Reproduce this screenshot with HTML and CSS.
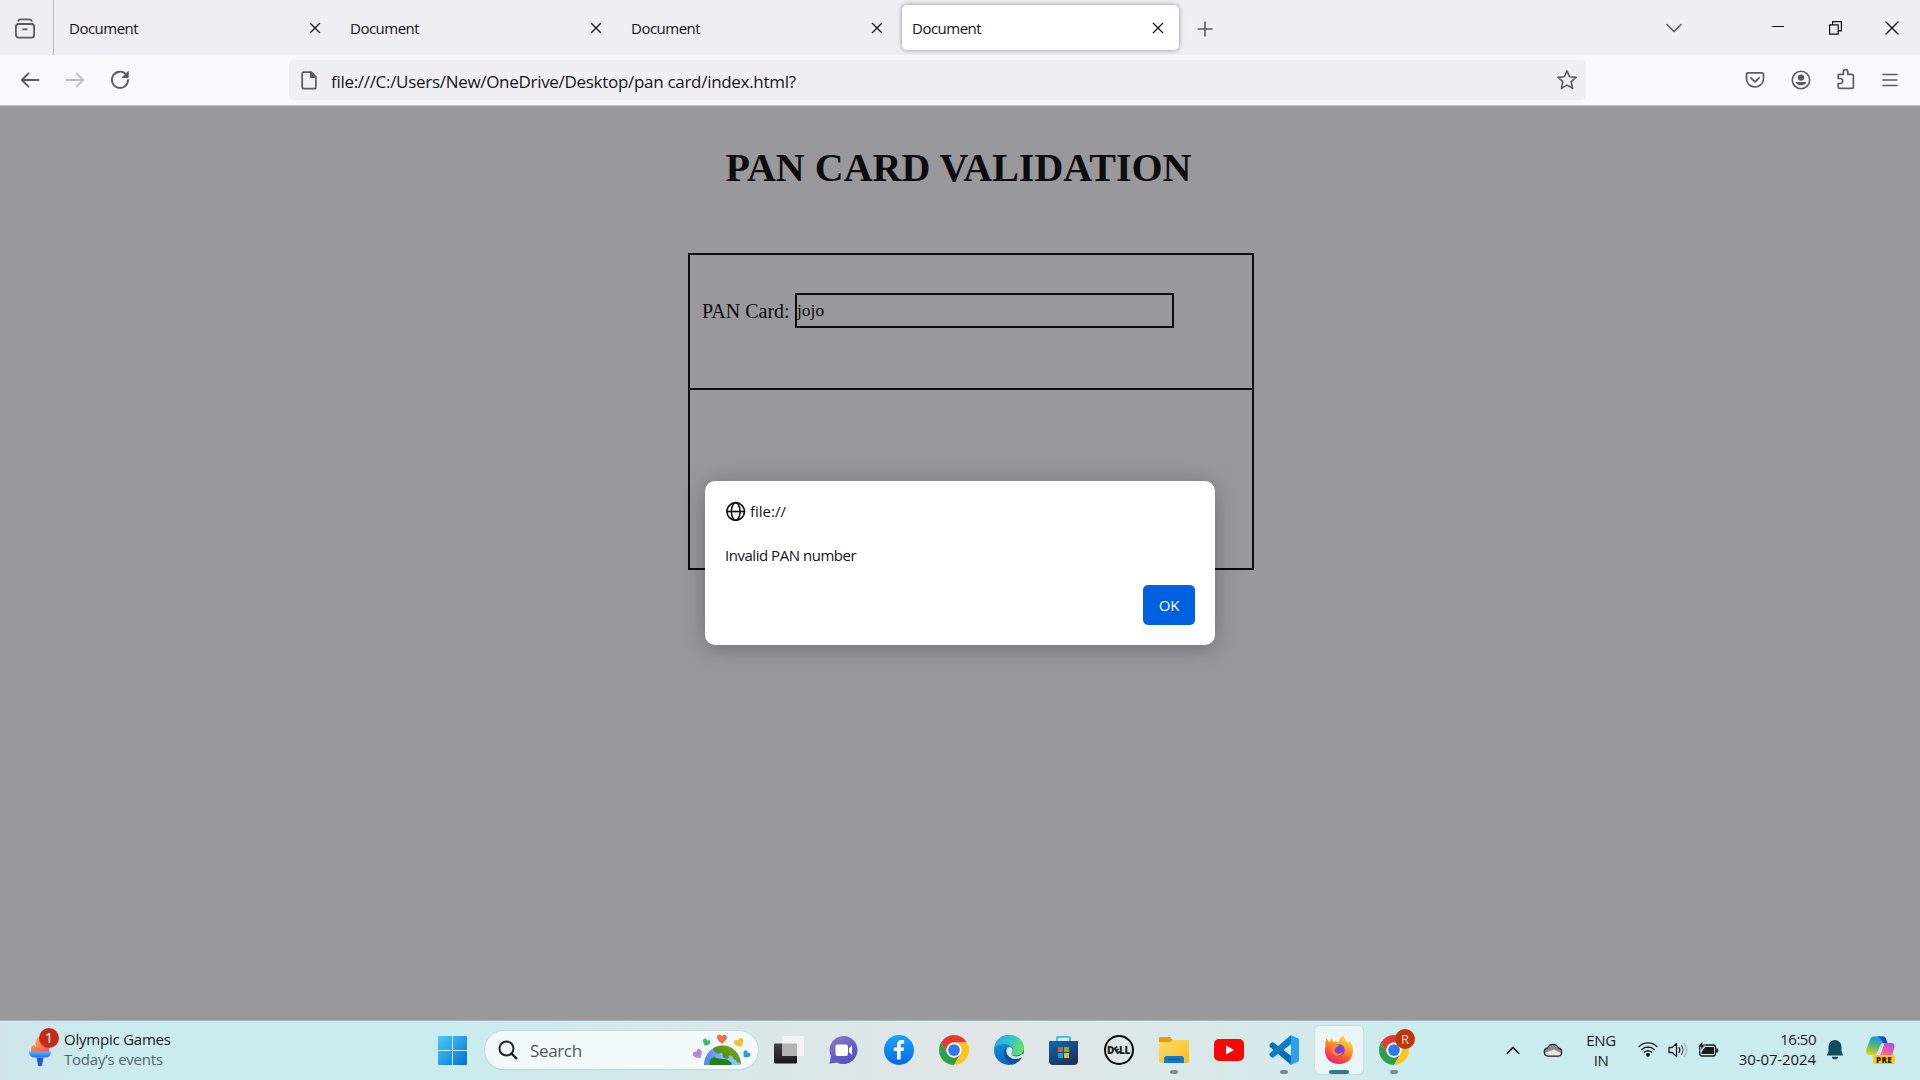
FILE: index.html
```html
<!DOCTYPE html>
<html lang="en">
<head>
<meta charset="utf-8">
<title>Document</title>
<link rel="stylesheet" href="styles.css">
</head>
<body>
<svg class="defs" width="0" height="0" aria-hidden="true">
  <defs>
    <symbol id="x" viewBox="0 0 12 12"><path d="M1 1l10 10M11 1L1 11" fill="none" stroke="#15141a" stroke-width="1.25"/></symbol>
    <symbol id="chrome" viewBox="0 0 48 48">
      <path fill="#e33b2e" d="M24 12H44.78A24 24 0 0 0 3.22 12L13.6 30A12 12 0 0 1 24 12z"/>
      <path fill="#2d9f49" d="M34.39 30L24 48A24 24 0 0 1 3.22 12L13.6 30A12 12 0 0 0 34.39 30z"/>
      <path fill="#fdc422" d="M24 12H44.78A24 24 0 0 1 24 48L34.39 30A12 12 0 0 0 24 12z"/>
      <circle cx="24" cy="24" r="12" fill="#fff"/><circle cx="24" cy="24" r="9.4" fill="#3079ee"/>
    </symbol>
    <linearGradient id="gWin" x1="0" y1="0" x2="1" y2="1"><stop stop-color="#4cc9fb"/><stop offset="1" stop-color="#0371d0"/></linearGradient>
    <linearGradient id="gChat" x1="0" y1="0" x2=".6" y2="1"><stop stop-color="#8f76b8"/><stop offset=".45" stop-color="#6f68c8"/><stop offset="1" stop-color="#5350bd"/></linearGradient>
    <linearGradient id="gFb" x1="0" y1="0" x2="0" y2="1"><stop stop-color="#17a5f8"/><stop offset="1" stop-color="#0568e6"/></linearGradient>
    <linearGradient id="gEdgeTop" x1="0" y1=".2" x2="1" y2=".5"><stop stop-color="#2aa9e4"/><stop offset=".5" stop-color="#31c3cf"/><stop offset="1" stop-color="#68e05c"/></linearGradient>
    <linearGradient id="gEdge" x1="0" y1="0" x2=".3" y2="1"><stop stop-color="#1b9de0"/><stop offset="1" stop-color="#0a67b9"/></linearGradient>
    <linearGradient id="gStore" x1="0" y1="0" x2=".6" y2="1"><stop stop-color="#0669b8"/><stop offset="1" stop-color="#213158"/></linearGradient>
    <linearGradient id="gFolder" x1="0" y1="0" x2="1" y2="1"><stop stop-color="#ffdc6b"/><stop offset="1" stop-color="#fbbd20"/></linearGradient>
    <linearGradient id="gFox" x1=".8" y1="0" x2=".3" y2="1"><stop stop-color="#ffe64a"/><stop offset=".35" stop-color="#ffab25"/><stop offset=".65" stop-color="#ff5a35"/><stop offset="1" stop-color="#e91f7a"/></linearGradient>
    <linearGradient id="gFlame" x1="0" y1="0" x2=".5" y2="1"><stop stop-color="#ffc928"/><stop offset="1" stop-color="#f45a6a"/></linearGradient>
    <linearGradient id="gTorch" x1="0" y1="0" x2="0" y2="1"><stop stop-color="#4fb5fb"/><stop offset="1" stop-color="#2b6fe0"/></linearGradient>
    <linearGradient id="gDark" x1="0" y1="0" x2="0" y2="1"><stop stop-color="#444"/><stop offset="1" stop-color="#161616"/></linearGradient>
    <linearGradient id="gSea" x1="0" y1="0" x2="1" y2="0"><stop stop-color="#5b7ee6"/><stop offset=".5" stop-color="#7cb8fa"/><stop offset="1" stop-color="#8cc8ff"/></linearGradient>
    <linearGradient id="gLand" x1="0" y1="1" x2="1" y2="0"><stop stop-color="#1f861f"/><stop offset="1" stop-color="#92a80c"/></linearGradient>
    <linearGradient id="gCoL" x1=".5" y1="0" x2=".3" y2="1"><stop stop-color="#1593e8"/><stop offset=".5" stop-color="#4db87a"/><stop offset="1" stop-color="#f0cc1c"/></linearGradient>
    <linearGradient id="gCoR" x1=".8" y1="0" x2=".2" y2="1"><stop stop-color="#a451e6"/><stop offset=".5" stop-color="#ef5f9e"/><stop offset="1" stop-color="#ff9a4c"/></linearGradient>
    <path id="heart" d="M0 4.6C-3 2-4.8.6-4.8-1.6-4.8-4.4-1.4-5 0-2.6 1.4-5 4.8-4.4 4.8-1.6 4.8.6 3 2 0 4.6z"/>
  </defs>
</svg>

<header class="tabs">
  <div class="view">
    <svg width="22" height="26" viewBox="0 0 22 26" fill="none" stroke="#5b5b66" stroke-width="1.8"><path d="M4.200 5.600Q4.500 3.400 7 3.400H15Q17.500 3.400 17.800 5.600"/><rect x="1.900" y="8" width="18.200" height="13.600" rx="2.600"/><path d="M8.500 13.300h5"/></svg>
  </div>
  <div class="tab"><span>Document</span><svg width="12" height="12"><use href="#x"/></svg></div>
  <div class="tab"><span>Document</span><svg width="12" height="12"><use href="#x"/></svg></div>
  <div class="tab"><span>Document</span><svg width="12" height="12"><use href="#x"/></svg></div>
  <div class="tab active"><span>Document</span><svg width="12" height="12"><use href="#x"/></svg></div>
  <svg class="plus" width="16" height="16" fill="none" stroke="#5b5b66" stroke-width="1.600"><path d="M8 .5v15M.5 8h15"/></svg>
  <div class="window">
    <svg width="20" height="12" viewBox="0 0 20 12" fill="none" stroke="#5b5b66" stroke-width="1.600" stroke-linecap="round" stroke-linejoin="round"><path d="M3 2.500l7 7 7-7"/></svg>
    <svg class="min" width="12" height="12" fill="none" stroke="#111" stroke-width="1"><path d="M0 4.500h12"/></svg>
    <svg class="restore" width="13" height="14" fill="none" stroke="#111" stroke-width="1.200"><path d="M.6 3.900h8.600v9.300H.6zM3.600 3.600V.6h8.800v9.300H9.500"/></svg>
    <svg width="14" height="14" fill="none" stroke="#111" stroke-width="1.250"><path d="M.5.5l13 13M13.500.5l-13 13"/></svg>
  </div>
</header>

<nav class="toolbar">
  <div class="moves">
    <svg width="20" height="18" fill="none" stroke="#5b5b66" stroke-width="1.800" stroke-linecap="round" stroke-linejoin="round"><path d="M18.500 9H2M8.500 2.300L1.800 9l6.700 6.700"/></svg>
    <svg width="20" height="18" fill="none" stroke="#bcbcc2" stroke-width="1.800" stroke-linecap="round" stroke-linejoin="round"><path d="M1.500 9H18M11.500 2.300L18.200 9l-6.700 6.700"/></svg>
    <svg width="20" height="20" fill="none" stroke="#5b5b66" stroke-width="1.800" stroke-linecap="round"><path d="M16.200 4.600A8.100 8.100 0 1 0 18.100 10"/><path d="M18.200 1.800v5.700h-5.700z" fill="#5b5b66" stroke-width="1" stroke-linejoin="round"/></svg>
  </div>
  <div class="url">
    <svg width="16" height="19" viewBox="0 0 16 19" fill="none" stroke="#5b5b66" stroke-width="1.700" stroke-linejoin="round"><path d="M3 1.200h7L14.900 6.200V16q0 1.700-1.700 1.700H3Q1.200 17.700 1.200 16V3Q1.200 1.200 3 1.200z"/><path d="M9.800 1.200v5h5z" fill="#5b5b66"/></svg>
    <span>file:///C:/Users/New/OneDrive/Desktop/pan card/index.html?</span>
    <svg class="star" width="22" height="22" viewBox="0 0 22 22" fill="none" stroke="#5b5b66" stroke-width="1.600" stroke-linejoin="round"><path d="M11 1.900L13.600 7.800 20 8.400 15.200 12.700 16.600 19.400 11 16.100 5.400 19.400 6.800 12.700 2 8.400 8.400 7.800z"/></svg>
  </div>
  <div class="tools">
    <svg width="20" height="20" viewBox="0 0 20 20" fill="none" stroke="#5b5b66" stroke-width="1.700" stroke-linecap="round" stroke-linejoin="round"><path d="M3.200 2.800h13.600q1.700 0 1.700 1.700V9a8.500 8 0 0 1-17 0V4.500q0-1.700 1.700-1.700z"/><path d="M5.800 7.800L10 11.800l4.200-4"/></svg>
    <svg width="20" height="20" viewBox="0 0 20 20"><circle cx="10" cy="10" r="8.700" fill="none" stroke="#5b5b66" stroke-width="1.600"/><circle cx="10" cy="7.600" r="3.200" fill="#5b5b66"/><path d="M4.600 12h10.800a5.600 4.400 0 0 1-10.800 0z" fill="#5b5b66"/></svg>
    <svg width="20" height="22" viewBox="0 0 20 22" fill="none" stroke="#5b5b66" stroke-width="1.700" stroke-linejoin="round"><path d="M2.200 10.500V7.500q0-1.200 1.200-1.200h4V3.800a2.200 2.200 0 0 1 4.400 0v2.500h4q1.600 0 1.600 1.600v11q0 1.500-1.500 1.500H3.700q-1.500 0-1.500-1.500v-3.400h2a2.500 2.500 0 0 0 0-5z"/></svg>
    <svg width="16" height="14" fill="none" stroke="#5b5b66" stroke-width="1.500" stroke-linecap="round"><path d="M1 1.500h14M1 7h14M1 12.500h14"/></svg>
  </div>
</nav>

<main class="page">
  <h1>PAN CARD VALIDATION</h1>
  <form class="form">
    <div class="row first"><label for="pan">PAN Card:</label><input id="pan" type="text" value="jojo"></div>
    <div class="row"></div>
  </form>
  <section class="dialog">
    <div class="origin">
      <svg width="21" height="20" fill="none" stroke="#15141a" stroke-width="1.700"><circle cx="10.700" cy="10.500" r="8.800"/><ellipse cx="10.700" cy="10.500" rx="4.300" ry="8.800"/><path d="M1.700 10.500h18"/></svg>
      <span>file://</span>
    </div>
    <p>Invalid PAN number</p>
    <button type="button">OK</button>
  </section>
</main>

<footer class="taskbar">
  <div class="widget">
    <div class="torch">
      <svg width="22" height="32" viewBox="0 0 22 32"><path d="M2 18Q1 12 5 9.500Q6 12 7 12.500Q5 5 10.500 1Q12 6 17 8Q21 12 20 18z" fill="url(#gFlame)"/><path d="M0 16.500h22q0 6-6 6H6q-6 0-6-6z" fill="url(#gTorch)"/><path d="M7.500 22.500h7l-1.500 8q-2 1.500-4 0z" fill="#2459d8"/></svg>
      <b>1</b>
    </div>
    <div class="news"><span>Olympic Games</span><span class="muted">Today’s events</span></div>
  </div>

  <div class="app start"><svg width="29" height="29" fill="url(#gWin)"><path d="M1 0h13v14H0V1q0-1 1-1zM15 0h13q1 0 1 1v13H15zM0 15h14v14H1q-1 0-1-1zM15 15h14v13q0 1-1 1H15z"/></svg></div>
  <div class="search">
    <svg width="20" height="20" fill="none" stroke="#222" stroke-width="2" stroke-linecap="round"><circle cx="8.500" cy="8.500" r="7"/><path d="M13.500 13.500l4.800 4.800" stroke-width="2.400"/></svg>
    <span>Search</span>
    <svg class="earth" width="58" height="32" viewBox="0 0 58 32">
      <path d="M11 31a18.500 19.500 0 0 1 37 0z" fill="url(#gSea)"/>
      <path d="M20 14.800Q24 11.500 29.500 11.500 37 11.500 42.500 17 47.500 22.500 48 30L45.500 28.500Q43.500 29 43 26 40 25.500 39.500 22.500 37.500 20.500 35.500 22 36.500 24.500 33.500 24.800 28.500 23.500 30 20.500 28.500 17.500 25.500 20 21 18.500 20 14.800z" fill="url(#gLand)"/>
      <path d="M16.500 31Q16 24 21 23.300 25 25 29.500 25 35 24.500 36.500 27.500 39 28 38.500 31z" fill="#21821b"/>
      <use href="#heart" transform="translate(29 5) scale(1.050)" fill="#f46c4f"/>
      <use href="#heart" transform="translate(13.300 8.500) rotate(25) scale(.8)" fill="#38bf6c"/>
      <use href="#heart" transform="translate(46.300 8.900) rotate(-25)" fill="#f9bd30"/>
      <use href="#heart" transform="translate(5 20.300) rotate(-35)" fill="#b983e0"/>
      <use href="#heart" transform="translate(53.300 20.500) rotate(40) scale(.8)" fill="#3098e0"/>
    </svg>
  </div>
  <div class="apps">
    <div class="app"><svg width="30" height="30"><rect x="0" y="8.500" width="23" height="20" rx="1" fill="url(#gDark)"/><path d="M8 1h21q1 0 1 1v18q0 1-1 1H8z" fill="#f3f3f3"/><path d="M8 8.500h14q1 0 1 1V21H8z" fill="#b3b3b3"/></svg></div>
    <div class="app"><svg width="30" height="30"><path d="M14.500 1a14 14 0 1 1-6.500 26.400L.5 28.800 1.900 21A14 14 0 0 1 14.500 1z" fill="url(#gChat)"/><rect x="6.500" y="9.500" width="12.500" height="11.500" rx="2" fill="#fff"/><path d="M20 13.500l3-3v9.500l-3-3z" fill="#fff"/></svg></div>
    <div class="app"><svg width="30" height="30"><circle cx="15" cy="15" r="15" fill="url(#gFb)"/><path d="M13 24.500V16H9.800v-3.600H13V10q0-5 4.700-5 1.500 0 2.500.2v3.300h-1.700q-1.900 0-1.900 1.900v2h3.600L19.500 16h-2.900v8.500z" fill="#fff"/></svg></div>
    <div class="app"><svg width="30" height="30"><use href="#chrome"/></svg></div>
    <div class="app"><svg width="30" height="30"><circle cx="15" cy="15" r="15" fill="url(#gEdge)"/><path d="M.5 12.500Q3 0 15 0 29.500 1 30 13 29.500 20.500 21.500 20.500 17 20.500 18 18 20.500 15 18 12.200 14 8.500 8 9.200 3 10 .5 12.500z" fill="url(#gEdgeTop)"/><path d="M10.500 14.500Q8.500 24 18 29.700 24.500 28 28 22 20 26.500 14.200 21 11.500 18 12.500 13z" fill="#124f9b"/><path d="M12.300 15.500Q13 11.500 16.800 12.200 19.500 14 18.200 17 16 20.500 21.500 21.500 25.500 21.500 29 18.500L30 22 27.700 22.600Q20 26 14.800 21.500 12 18.500 12.300 15.500z" fill="#e0e6e7"/></svg></div>
    <div class="app"><svg width="30" height="30"><path d="M8 7V3q0-1.200 1.200-1.200h10.600q1.200 0 1.200 1.200v4" fill="none" stroke="#2bbcec" stroke-width="1.800"/><path d="M0 6h29v20q0 4-4 4h-21q-4 0-4-4z" fill="url(#gStore)"/><path d="M9 12h5v5h-5z" fill="#f25022"/><path d="M15 12h5v5h-5z" fill="#7fba00"/><path d="M9 18h5v5h-5z" fill="#00a4ef"/><path d="M15 18h5v5h-5z" fill="#ffb900"/></svg></div>
    <div class="app"><div class="dell">D<i>E</i>LL</div></div>
    <div class="app open"><svg width="30" height="28"><path d="M0 2q0-1 1-1h10l3 3.500H29q1 0 1 1V10H0z" fill="#dfa005"/><path d="M0 6h11l3-2h15q1 0 1 1v21q0 1-1 1H1q-1 0-1-1z" fill="url(#gFolder)"/><path d="M5 27v-4q0-3 3-3h14q3 0 3 3v4z" fill="#1378cf"/><path d="M9 23.500h12" stroke="#0b539c" stroke-width="1.200"/></svg></div>
    <div class="app"><svg width="30" height="22"><rect width="30" height="22" rx="5" fill="#f90707"/><path d="M12 6.500l8 4.500-8 4.500z" fill="#fff"/></svg></div>
    <div class="app open"><svg width="30" height="30"><path d="M1 9l1.800-1.400q.8-.5 1.600 0L23 21.500V29L21.500 29.600 1 12Q-.2 10.500 1 9z" fill="#0b6cb5"/><path d="M1 21l1.800 1.400q.8.500 1.600 0L23 8.500V1L21.500.4 1 18Q-.2 19.500 1 21z" fill="#0f7bc6"/><path d="M22 .2L29 3.200q1 .5 1 1.700v20.200q0 1.200-1 1.700L22 29.800q-1 0-1.200-1L22 27.500z" fill="#2da0ee"/></svg></div>
    <div class="app open focused"><svg width="30" height="30"><path d="M1.500 11.500Q1 6 2.500 3.500L5.500 7 8 3 9 6.500Q12 6 14.500 7.500 15 3 19.500 .5 20.500 5 24.500 8 25 6.500 25.500 6 29 10.500 29 16.500 28 28.500 15 29 2.500 28.500 1 17 .8 14 1.500 11.500z" fill="url(#gFox)"/><circle cx="15" cy="15" r="5.800" fill="#7543df"/><path d="M9 8Q13 7.500 15 10.500L12 12.500Q9.500 15 11 17 14 20 19 17.500 16 22.500 10.500 20 5 16 9 8z" fill="#ff8a25"/></svg></div>
    <div class="app open"><svg width="30" height="30"><use href="#chrome"/></svg><b class="profile">R</b></div>
  </div>

  <div class="tray">
    <svg class="up" width="14" height="9" fill="none" stroke="#1b1b1b" stroke-width="1.600"><path d="M.8 7.800L7 1.500l6.200 6.300"/></svg>
    <svg class="cloud" width="20" height="14" viewBox="0 0 20 14"><path d="M5 13.200a4.200 4.200 0 0 1-.4-8.300A5.800 5.800 0 0 1 15.300 4.800 4.300 4.300 0 0 1 15.500 13.200z" fill="#8d8d8d"/><path d="M3 12.600Q1.500 11 3 9.500L11 6.500 18.800 10.500Q18 13 15.500 13.200H5z" fill="#e6e6e6"/><path d="M5 13.200a4.200 4.200 0 0 1-.4-8.300A5.800 5.800 0 0 1 15.300 4.800 4.300 4.300 0 0 1 15.500 13.200z" fill="none" stroke="#222" stroke-width="1.200"/></svg>
    <div class="lang"><span>ENG</span><span>IN</span></div>
    <svg class="wifi" width="20" height="16" viewBox="0 0 20 16" fill="none" stroke="#1b1b1b" stroke-width="1.300" stroke-linecap="round"><path d="M1 5.600a12.600 12.600 0 0 1 18 0M3.700 8.600a8.900 8.900 0 0 1 12.600 0M6.300 11.300a5.200 5.200 0 0 1 7.400 0"/><circle cx="10" cy="13.700" r="1.300" fill="#1b1b1b"/></svg>
    <svg class="vol" width="21" height="16" viewBox="0 0 21 16" fill="none" stroke="#1b1b1b" stroke-width="1.300" stroke-linecap="round" stroke-linejoin="round"><path d="M1 5.500h3.200L8.500 1.500v13L4.200 10.500H1zM11 5.500q1.700 2.500 0 5"/><path d="M13.500 3.500q3.200 4.500 0 9" stroke="#5d6b6d"/><path d="M16.200 1.300q5 6.700 0 13.400" stroke="#9fb6b9"/></svg>
    <svg class="bat" width="21" height="16" viewBox="0 0 21 16"><rect x="1.700" y="4" width="15.800" height="11" rx="2.300" fill="none" stroke="#1b1b1b" stroke-width="1.300"/><path d="M7 6h9v7H3.500V11z" fill="#1b1b1b"/><path d="M18.200 7.500h1q1 0 1 1v2q0 1-1 1h-1z" fill="#1b1b1b"/><path d="M4.500 0L0 6h3L1.800 10 7.300 4H4.500z" fill="#1b1b1b" stroke="#cbecee" stroke-width=".5"/></svg>
    <div class="clock"><span class="time">16:50</span><span>30-07-2024</span></div>
    <svg class="bell" width="18" height="20" viewBox="0 0 18 20" fill="#144c5b"><path d="M9 0a6.500 6.500 0 0 1 6.500 6.500v4.700L17.200 15.500H.8L2.500 11.200V6.500A6.500 6.500 0 0 1 9 0zM6 16.700h6a3 2.600 0 0 1-6 0z"/></svg>
    <div class="copilot">
      <svg width="29" height="26" viewBox="0 0 29 26"><path d="M8 .5h9q2.500 0 3 3L21 7h-4q-2 0-3 3l-2.500 6q-1 3-4 3H4Q-1 19 .5 13L4 3.500Q5 .5 8 .5z" fill="url(#gCoL)"/><path d="M11 .5h6q2.700 0 3.500 3.500l1 3h-4.500Q15.500 2 11 .5z" fill="#1a47cf"/><path d="M17.500 7H25q4 0 3.500 4L26 20q-1 4-5 4h-7q-3 0-3-3l2.500-4 2-7q.7-3 2-3z" fill="url(#gCoR)"/><path d="M17.500 7.500L14 17.500q-.7 1.500-2 1.500" fill="none" stroke="#e9f3fb" stroke-width="1.500"/></svg>
      <b>PRE</b>
    </div>
  </div>
</footer>
</body>
</html>
```
FILE: styles.css
```css
* { box-sizing: border-box; }
body {
  margin: 0;
  width: 1920px;
  height: 1080px;
  overflow: hidden;
  display: flex;
  flex-direction: column;
  font: 15px/20px "Open Sans", "Noto Sans", sans-serif;
  color: #15141a;
}
svg { display: block; flex: none; }
.defs { position: absolute; }

/* Tab strip */
.tabs { height: 55px; flex: none; display: flex; align-items: center; background: #efeef3; }
.view { width: 54px; height: 55px; padding: 16px 0 0 14px; border-right: 1px solid #b9b9c0; margin-right: 5px; }
.tab {
  width: 277px;
  height: 45px;
  margin-right: 4px;
  padding: 0 15px 0 10px;
  border-radius: 5px;
  display: flex;
  align-items: center;
  justify-content: space-between;
  letter-spacing: -0.5px;
}
.tab span { padding-top: 1px; }
.tab.active { background: #fff; box-shadow: 0 0 5px rgba(0, 0, 0, .4); }
.plus { margin: 3px 0 0 14px; }
.window { margin-left: auto; padding-right: 21px; display: flex; align-items: center; }
.min { margin-left: 88px; }
.restore { margin: 0 43px 0 45px; }

/* Toolbar */
.toolbar { height: 51px; flex: none; display: flex; align-items: center; background: #f9f9fb; border-bottom: 1px solid #c4c4c8; }
.moves { width: 289px; padding-left: 20px; display: flex; align-items: center; gap: 25px; }
.url {
  width: 1297px;
  height: 40px;
  padding: 0 8px 0 12px;
  border-radius: 5px;
  background: #f0eff4;
  display: flex;
  align-items: center;
  gap: 14px;
  font-size: 17px;
  letter-spacing: -0.3px;
}
.url span { padding-top: 3px; }
.star { margin-left: auto; }
.tools { margin-left: auto; padding-right: 22px; display: flex; align-items: center; gap: 26px; }
.tools svg:nth-child(3) { margin: -2px 0 0 -1px; }
.tools svg:nth-child(4) { margin-top: -1px; }

/* Page */
.page {
  position: relative;
  height: 914px;
  background: #99999b;
  color: #0c0c0e;
  font: 20px/24px "Liberation Serif", serif;
}
h1 { width: 1917px; margin: 0; padding-top: 39px; font-size: 40px; line-height: 46px; text-align: center; }
.form { width: 566px; margin: 62px 0 0 688px; border: 2px solid #0c0c0e; }
.row { height: 178px; padding: 38px 0 0 12px; display: flex; align-items: flex-start; }
.row.first { height: 135px; border-bottom: 2px solid #0c0c0e; }
.row label { width: 93px; padding-top: 6px; }
.row input {
  width: 379px;
  height: 35px;
  padding: 0;
  border: 2px solid #0c0c0e;
  background: transparent;
  color: inherit;
  font: 17.5px "Liberation Serif", serif;
}

/* Alert, centred over the page */
.dialog {
  position: absolute;
  left: 705px;
  top: 375px;
  width: 510px;
  height: 164px;
  padding: 20px;
  border-radius: 10px;
  background: #fff;
  box-shadow: 0 3px 24px rgba(0, 0, 0, .28);
  color: #15141a;
  font: 15px/20px "Open Sans", sans-serif;
  display: flex;
  flex-direction: column;
}
.origin { display: flex; align-items: center; gap: 4px; font-weight: 500; }
.dialog p { margin: 24px 0 20px; letter-spacing: -0.47px; }
.dialog button {
  align-self: flex-end;
  width: 52px;
  height: 40px;
  padding: 0;
  border: 0;
  border-radius: 5px;
  background: #0061e0;
  color: #fff;
  font: inherit;
  letter-spacing: -0.3px;
}

/* Taskbar */
.taskbar {
  height: 60px;
  flex: none;
  display: flex;
  align-items: center;
  color: #1b1b1b;
  background: linear-gradient(90deg, #cfe5ea 0, #cbecee 110px, #cbecee 450px, #dce7e7 800px, #e0e6e7 980px, #dbe8e9 1180px, #cbecee 1420px);
  box-shadow: inset 0 1px #a9b8ba;
}
.widget { width: 425px; padding-left: 29px; display: flex; align-items: center; gap: 13px; letter-spacing: -0.22px; }
.torch { position: relative; padding-top: 1px; }
.torch b {
  position: absolute;
  left: 10px;
  top: -6px;
  width: 20px;
  height: 20px;
  border-radius: 50%;
  background: #c42b1c;
  color: #fff;
  font-size: 14px;
  font-weight: 400;
  text-align: center;
}
.news, .lang, .clock { display: flex; flex-direction: column; }
.news { margin-top: -2px; }
.muted { color: #53686b; }
.app {
  position: relative;
  width: 55px;
  height: 60px;
  display: flex;
  align-items: center;
  justify-content: center;
}
.start { width: 60px; padding-right: 5px; }
.search {
  width: 273px;
  height: 38px;
  padding: 0 7px 0 13px;
  border-radius: 19px;
  background: #f2f9fa;
  box-shadow: 0 0 0 1px #c5dcde, 0 1px 1px #9db3b5;
  display: flex;
  align-items: center;
  color: #505657;
  font-size: 17px;
  letter-spacing: -0.35px;
}
.search span { margin-left: 12px; padding-top: 2px; }
.earth { margin-left: auto; }
.apps { display: flex; margin-left: 3px; }
.dell {
  width: 30px;
  height: 30px;
  border: 2px solid #0a0a0a;
  border-radius: 50%;
  font: 800 10px/26px "Open Sans", sans-serif;
  letter-spacing: -0.4px;
  display: flex;
  justify-content: center;
}
.dell i { font-style: normal; transform: rotate(-35deg); }
.open::after {
  content: "";
  position: absolute;
  left: 24px;
  top: 50px;
  width: 8px;
  height: 4px;
  border-radius: 2px;
  background: #818a8b;
}
.focused::before {
  content: "";
  position: absolute;
  left: 4px;
  top: 6px;
  width: 48px;
  height: 48px;
  border-radius: 5px;
  background: #e9f5f6;
  box-shadow: 0 0 1px 1px #c8dcde;
}
.focused svg { position: relative; }
.focused::after { left: 18px; width: 20px; background: #25808f; }
.profile {
  position: absolute;
  left: 29px;
  top: 9px;
  width: 20px;
  height: 20px;
  border-radius: 50%;
  background: #bf360c;
  color: #f3d5ca;
  font-size: 13px;
  font-weight: 400;
  text-align: center;
}
.tray { margin-left: auto; padding-right: 24px; display: flex; align-items: center; letter-spacing: -0.4px; }
.cloud { margin: -1px 24px 0 23px; }
.lang { width: 28px; align-items: center; }
.wifi { margin: -2px 10px 0 23px; }
.bat { margin: -3px 0 0 9px; }
.clock { width: 97px; align-items: flex-end; margin-top: -2px; letter-spacing: -0.1px; }
.time { letter-spacing: -0.5px; }
.bell { margin-left: 10px; }
.copilot { position: relative; width: 30px; height: 28px; margin-left: 22px; }
.copilot b {
  position: absolute;
  left: 7px;
  top: 19px;
  width: 22px;
  height: 9px;
  border-radius: 2px;
  background: #ffc60a;
  font: 800 8px/9px "Open Sans", sans-serif;
  letter-spacing: .3px;
  text-align: center;
}
```
